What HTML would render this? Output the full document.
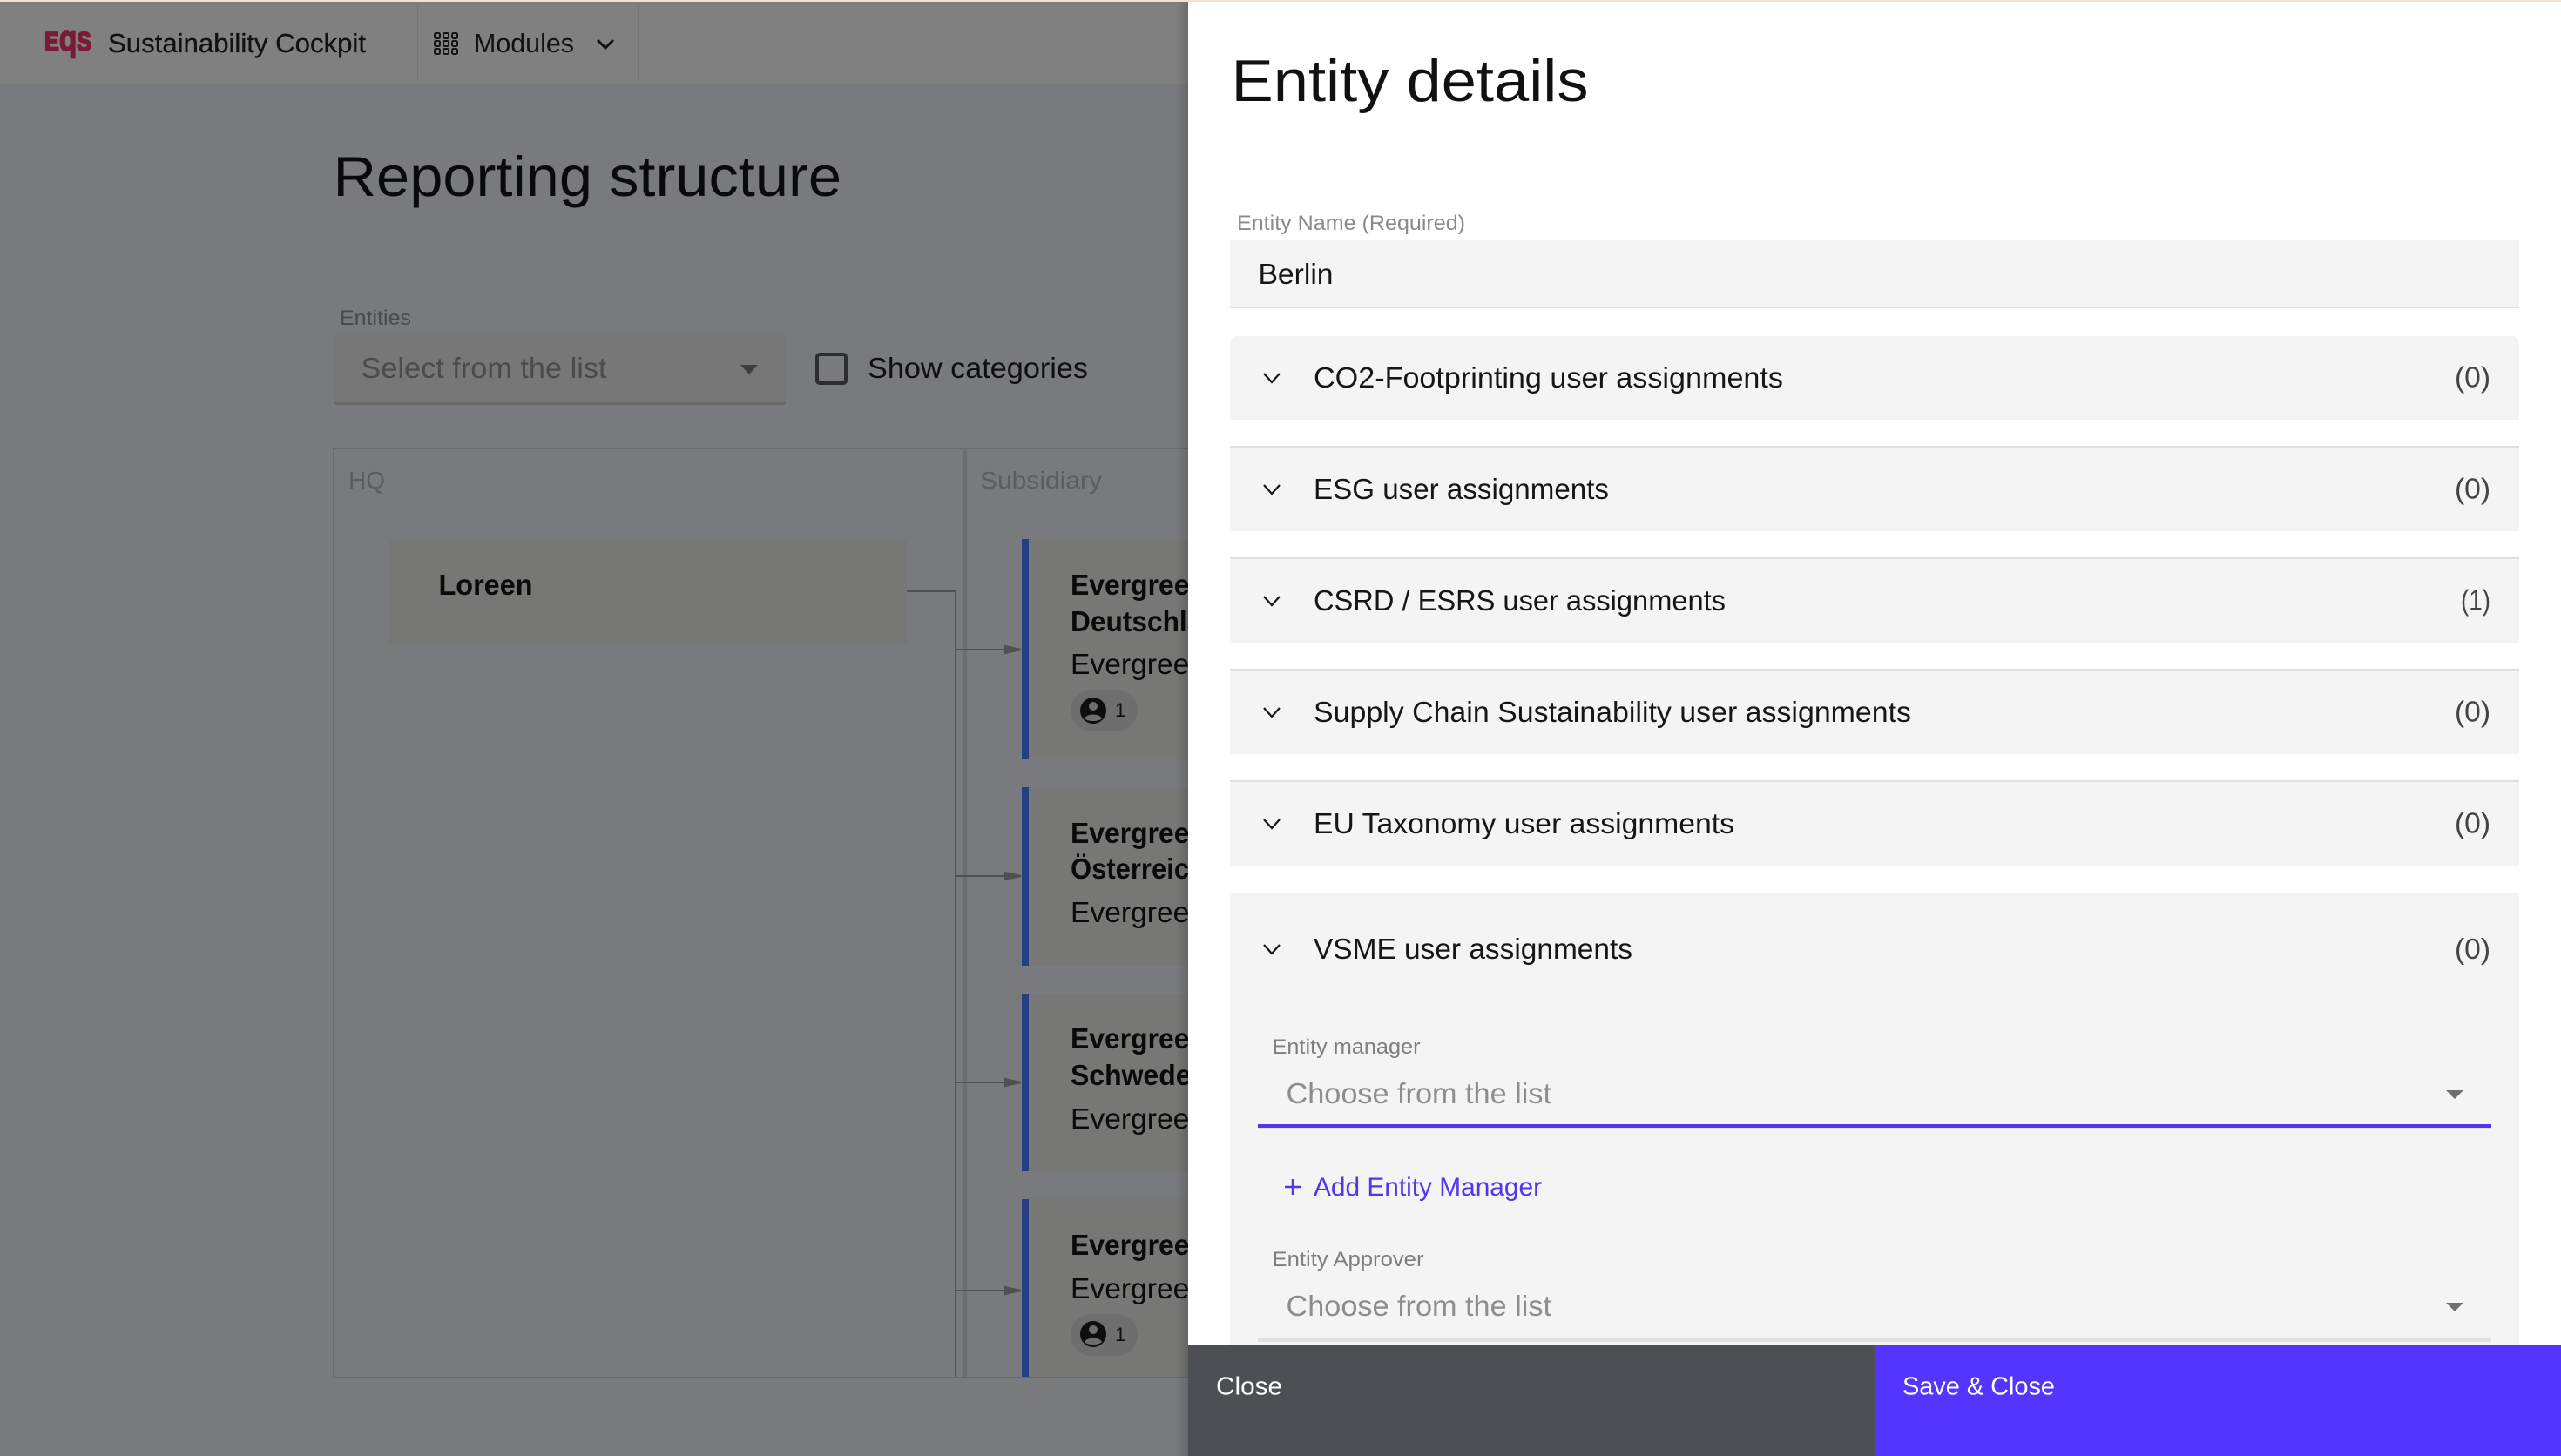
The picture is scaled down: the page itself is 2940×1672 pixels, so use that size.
<!DOCTYPE html>
<html lang="en"><head><meta charset="utf-8"><title>Entity details</title>
<style>
html,body{margin:0;padding:0;background:#797a7e;width:2940px;height:1672px;overflow:hidden}
svg{display:block}
text{font-family:"Liberation Sans",Arial,sans-serif;white-space:pre}
.b{font-weight:700}
</style></head><body>
<svg xmlns="http://www.w3.org/2000/svg" width="2940" height="1672" viewBox="0 0 2940 1672">
<defs><linearGradient id="sh" x1="0" x2="1" y1="0" y2="0"><stop offset="0" stop-color="#000" stop-opacity="0"/><stop offset="1" stop-color="#000" stop-opacity=".16"/></linearGradient></defs>
<rect width="2940" height="1672" fill="#797a7e"/>
<!-- header -->
<rect y="2" width="1364" height="96" fill="#808080"/>
<rect y="97" width="1364" height="1" fill="#777878"/>
<rect x="479" y="6" width="1" height="87" fill="#767676"/>
<rect x="732" y="6" width="1" height="87" fill="#767676"/>
<text class="b" x="51" y="58" font-size="31" fill="#7a1a36" stroke="#7a1a36" stroke-width="1.8" textLength="54" lengthAdjust="spacingAndGlyphs">E<tspan font-size="41">q</tspan>S</text>
<text x="124" y="60" font-size="31" fill="#111" textLength="296" lengthAdjust="spacingAndGlyphs" stroke="#111" stroke-width=".3">Sustainability Cockpit</text>
<g fill="none" stroke="#141414" stroke-width="2">
<rect x="499" y="38" width="6" height="6" rx="1.5"/><rect x="509" y="38" width="6" height="6" rx="1.5"/><rect x="519" y="38" width="6" height="6" rx="1.5"/>
<rect x="499" y="47" width="6" height="6" rx="1.5"/><rect x="509" y="47" width="6" height="6" rx="1.5"/><rect x="519" y="47" width="6" height="6" rx="1.5"/>
<rect x="499" y="56" width="6" height="6" rx="1.5"/><rect x="509" y="56" width="6" height="6" rx="1.5"/><rect x="519" y="56" width="6" height="6" rx="1.5"/>
</g>
<text x="544" y="60" font-size="31" fill="#111" textLength="115" lengthAdjust="spacingAndGlyphs">Modules</text>
<path d="M686 46L695 55L704 46" fill="none" stroke="#111" stroke-width="3"/>
<!-- page -->
<text x="382.5" y="225" font-size="65" fill="#0a0a0a" textLength="583.5" lengthAdjust="spacingAndGlyphs">Reporting structure</text>
<text x="390" y="373" font-size="24.5" fill="#4a4a4c" textLength="82" lengthAdjust="spacingAndGlyphs">Entities</text>
<rect x="384" y="385" width="518" height="80" fill="#777777"/>
<rect x="384" y="462" width="518" height="3" fill="#6b6b6b"/>
<text x="414.5" y="434" font-size="33" fill="#4b4b4b" textLength="282" lengthAdjust="spacingAndGlyphs">Select from the list</text>
<path d="M850 419H870L860 430Z" fill="#3f3f3f"/>
<rect x="938" y="407" width="33" height="33" rx="3" fill="none" stroke="#2d2d2d" stroke-width="4"/>
<text x="996" y="434" font-size="33" fill="#0f0f0f" textLength="253" lengthAdjust="spacingAndGlyphs">Show categories</text>
<!-- table -->
<path d="M383 1581V515H1364" fill="none" stroke="#69696b" stroke-width="2"/>
<rect x="382" y="1581" width="982" height="2" fill="#69696b"/>
<rect x="1106" y="515" width="4" height="1066" fill="#6c6d6e"/>
<text x="400" y="561" font-size="28" fill="#5c5d5f" textLength="42" lengthAdjust="spacingAndGlyphs">HQ</text>
<text x="1125" y="561" font-size="28" fill="#5c5d5f" textLength="140" lengthAdjust="spacingAndGlyphs">Subsidiary</text>
<rect x="446" y="619" width="595" height="121" fill="#777776"/>
<text class="b" x="503.5" y="683" font-size="33" fill="#0a0a0a" textLength="108" lengthAdjust="spacingAndGlyphs">Loreen</text>
<path d="M1041 679H1097V1581" fill="none" stroke="#505050" stroke-width="2"/>
<g fill="#505050" stroke="#505050" stroke-width="2">
<path d="M1097 746H1172" fill="none"/><path d="M1154 742L1172 746L1154 750Z"/>
<path d="M1097 1006H1172" fill="none"/><path d="M1154 1002L1172 1006L1154 1010Z"/>
<path d="M1097 1243H1172" fill="none"/><path d="M1154 1239L1172 1243L1154 1247Z"/>
<path d="M1097 1482H1172" fill="none"/><path d="M1154 1478L1172 1482L1154 1486Z"/>
</g>
<!-- cards -->
<g fill="#777776"><rect x="1173" y="619" width="191" height="253"/><rect x="1173" y="904" width="191" height="205"/><rect x="1173" y="1141" width="191" height="204"/><rect x="1173" y="1377" width="191" height="204"/></g>
<g fill="#263d80"><rect x="1173" y="619" width="8" height="253"/><rect x="1173" y="904" width="8" height="205"/><rect x="1173" y="1141" width="8" height="204"/><rect x="1173" y="1377" width="8" height="204"/></g>
<g font-size="33" fill="#0a0a0a">
<text class="b" x="1229" y="683" textLength="156" lengthAdjust="spacingAndGlyphs">Evergreen</text>
<text class="b" x="1229" y="725" textLength="190" lengthAdjust="spacingAndGlyphs">Deutschland</text>
<text x="1229" y="774" textLength="155" lengthAdjust="spacingAndGlyphs">Evergreen</text>
<text class="b" x="1229" y="968" textLength="156" lengthAdjust="spacingAndGlyphs">Evergreen</text>
<text class="b" x="1229" y="1009" textLength="155" lengthAdjust="spacingAndGlyphs">Österreich</text>
<text x="1229" y="1059" textLength="155" lengthAdjust="spacingAndGlyphs">Evergreen</text>
<text class="b" x="1229" y="1204" textLength="156" lengthAdjust="spacingAndGlyphs">Evergreen</text>
<text class="b" x="1229" y="1246" textLength="158" lengthAdjust="spacingAndGlyphs">Schweden</text>
<text x="1229" y="1296" textLength="155" lengthAdjust="spacingAndGlyphs">Evergreen</text>
<text class="b" x="1229" y="1441" textLength="156" lengthAdjust="spacingAndGlyphs">Evergreen</text>
<text x="1229" y="1491" textLength="155" lengthAdjust="spacingAndGlyphs">Evergreen</text>
</g>
<rect x="1229" y="792" width="77" height="48" rx="24" fill="#6e6e6e"/>
<circle cx="1255" cy="816" r="15" fill="#0e0e0e"/><circle cx="1255" cy="811" r="5" fill="#6e6e6e"/><path d="M1245 825C1248 819 1262 819 1265 825C1261 829 1249 829 1245 825Z" fill="#6e6e6e"/>
<text x="1280" y="823" font-size="22" fill="#0e0e0e">1</text>
<rect x="1229" y="1509" width="77" height="48" rx="24" fill="#6e6e6e"/>
<circle cx="1255" cy="1532" r="15" fill="#0e0e0e"/><circle cx="1255" cy="1527" r="5" fill="#6e6e6e"/><path d="M1245 1541C1248 1535 1262 1535 1265 1541C1261 1545 1249 1545 1245 1541Z" fill="#6e6e6e"/>
<text x="1280" y="1540" font-size="22" fill="#0e0e0e">1</text>
<!-- shadow -->
<rect x="1350" y="2" width="14" height="1670" fill="url(#sh)"/>
<!-- panel -->
<rect x="1364" y="0" width="1576" height="1672" fill="#fff"/>
<rect width="2940" height="2" fill="#efe2d9"/>
<text x="1413.5" y="116" font-size="68" fill="#111" textLength="410" lengthAdjust="spacingAndGlyphs">Entity details</text>
<text x="1420" y="264" font-size="24.5" fill="#8a8a8a" textLength="262" lengthAdjust="spacingAndGlyphs">Entity Name (Required)</text>
<rect x="1412" y="276" width="1480" height="78" fill="#f4f4f4"/>
<rect x="1412" y="352" width="1480" height="2" fill="#dedede"/>
<text x="1444.5" y="326" font-size="33" fill="#161616" textLength="86" lengthAdjust="spacingAndGlyphs">Berlin</text>
<!-- accordions -->
<path d="M1412 482V394a8 8 0 0 1 8-8H2884a8 8 0 0 1 8 8V482Z" fill="#f4f4f4"/>
<g fill="#f4f4f4"><rect x="1412" y="512" width="1480" height="98"/><rect x="1412" y="640" width="1480" height="98"/><rect x="1412" y="768" width="1480" height="98"/><rect x="1412" y="896" width="1480" height="98"/><rect x="1412" y="1025" width="1480" height="520"/></g>
<g fill="#e0e0e0"><rect x="1412" y="512" width="1480" height="2"/><rect x="1412" y="640" width="1480" height="2"/><rect x="1412" y="768" width="1480" height="2"/><rect x="1412" y="896" width="1480" height="2"/></g>
<g fill="none" stroke="#161616" stroke-width="2.2">
<path d="M1451 429L1460 439L1469 429"/><path d="M1451 557L1460 567L1469 557"/><path d="M1451 685L1460 695L1469 685"/><path d="M1451 813L1460 823L1469 813"/><path d="M1451 941L1460 951L1469 941"/><path d="M1451 1085L1460 1095L1469 1085"/>
</g>
<g font-size="33" fill="#161616">
<text x="1508" y="445" textLength="539" lengthAdjust="spacingAndGlyphs">CO2-Footprinting user assignments</text>
<text x="1508" y="573" textLength="339" lengthAdjust="spacingAndGlyphs">ESG user assignments</text>
<text x="1508" y="701" textLength="473" lengthAdjust="spacingAndGlyphs">CSRD / ESRS user assignments</text>
<text x="1508" y="829" textLength="686" lengthAdjust="spacingAndGlyphs">Supply Chain Sustainability user assignments</text>
<text x="1508" y="957" textLength="483" lengthAdjust="spacingAndGlyphs">EU Taxonomy user assignments</text>
<text x="1508" y="1101" textLength="366" lengthAdjust="spacingAndGlyphs">VSME user assignments</text>
</g>
<g font-size="33" fill="#444">
<text x="2818" y="444.5" textLength="41" lengthAdjust="spacingAndGlyphs">(0)</text>
<text x="2818" y="572.5" textLength="41" lengthAdjust="spacingAndGlyphs">(0)</text>
<text x="2825" y="700.5" textLength="34" lengthAdjust="spacingAndGlyphs">(1)</text>
<text x="2818" y="828.5" textLength="41" lengthAdjust="spacingAndGlyphs">(0)</text>
<text x="2818" y="956.5" textLength="41" lengthAdjust="spacingAndGlyphs">(0)</text>
<text x="2818" y="1101" textLength="41" lengthAdjust="spacingAndGlyphs">(0)</text>
</g>
<!-- VSME content -->
<text x="1460.5" y="1210" font-size="24.5" fill="#7e7e7e" textLength="170" lengthAdjust="spacingAndGlyphs">Entity manager</text>
<text x="1476.5" y="1267" font-size="33" fill="#8d8d8d" textLength="304.5" lengthAdjust="spacingAndGlyphs">Choose from the list</text>
<path d="M2808 1252H2828L2818 1262Z" fill="#6f6f6f"/>
<rect x="1444" y="1295" width="1416" height="2" fill="#e0e0e0"/>
<rect x="1444" y="1291" width="1416" height="4" fill="#5235f0"/>
<path d="M1475 1363H1493M1484 1354V1372" fill="none" stroke="#5235f0" stroke-width="2.5"/>
<text x="1508" y="1373" font-size="30" fill="#5235f0" textLength="262" lengthAdjust="spacingAndGlyphs">Add Entity Manager</text>
<text x="1460.5" y="1454" font-size="24.5" fill="#7e7e7e" textLength="174" lengthAdjust="spacingAndGlyphs">Entity Approver</text>
<text x="1476.5" y="1511" font-size="33" fill="#8d8d8d" textLength="304.5" lengthAdjust="spacingAndGlyphs">Choose from the list</text>
<path d="M2808 1496H2828L2818 1506Z" fill="#6f6f6f"/>
<rect x="1444" y="1537" width="1416" height="4" fill="#e0e0e0"/>
<!-- footer -->
<rect x="1364" y="1544" width="788" height="128" fill="#4e4f54"/>
<rect x="2152" y="1544" width="788" height="128" fill="#5235ff"/>
<text x="1396" y="1601.5" font-size="29" fill="#fff" textLength="76" lengthAdjust="spacingAndGlyphs">Close</text>
<text x="2184" y="1601.5" font-size="29" fill="#fff" textLength="175" lengthAdjust="spacingAndGlyphs">Save &amp; Close</text>
</svg>
</body></html>
